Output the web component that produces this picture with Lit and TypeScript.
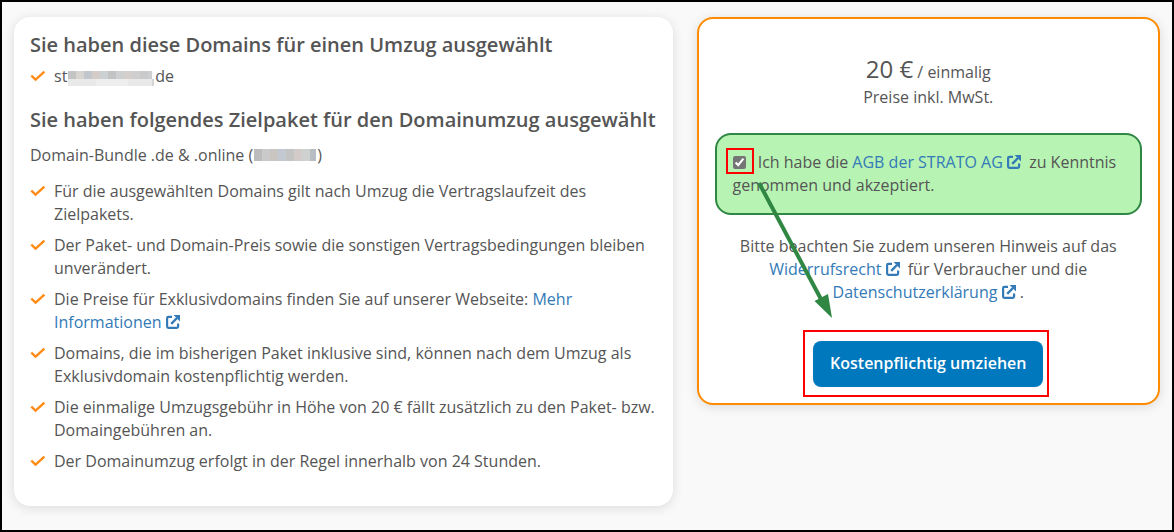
import { LitElement, html, svg, css } from "lit";
import { customElement } from "lit/decorators.js";

const check = html`<svg class="check" viewBox="0 0 16 12" aria-hidden="true">
  <path d="M1.3 5.6 L5.6 9.7 L14.4 1.6" fill="none" stroke="#ff8a14" stroke-width="2.3" />
</svg>`;

const external = html`<svg class="external" viewBox="0 0 14 14" aria-hidden="true">
  <path d="M6 1.9 H2.4 Q1.1 1.9 1.1 3.2 V11.6 Q1.1 12.9 2.4 12.9 H10.8 Q12.1 12.9 12.1 11.6 V8.4" fill="none" stroke="currentColor" stroke-width="2.2" />
  <path d="M5.2 8.8 L11 3" fill="none" stroke="currentColor" stroke-width="2.4" />
  <path d="M7.6 0 H14 V6.4 Z" fill="currentColor" />
</svg>`;

const mosaic = (colors: string[], step: number) =>
  colors.map((c, i) => svg`<rect x=${i * step} y="0" width=${step} height="8" fill=${c} />`);

const domainTones = ["#c4c4c4", "#d8d5d1", "#c2c7ce", "#d5ccc8", "#cbd0d3", "#c3c3c4", "#cecfd0", "#d4cecc", "#cfcfd0", "#cacacb", "#cdced0"];
const numberTones = ["#bcbcbd", "#c9cac9", "#c9c6c2", "#c3c9d1", "#c4c4c4", "#d2cbc9", "#cfd1d1", "#b8bdc4"];

@customElement("app-root")
export class AppRoot extends LitElement {
  static styles = css`
    :host {
      display: block;
      font: 16px/23px "Open Sans", sans-serif;
      color: #555;
    }
    * { box-sizing: border-box; }
    .page {
      min-height: 100vh;
      border: 2px solid #000;
      background: #f9f9f9;
      padding: 15px 12px 24px;
      display: grid;
      grid-template-columns: repeat(12, minmax(0, 1fr));
      column-gap: 24px;
      align-items: start;
    }
    .card {
      background: #fff;
      border-radius: 16px;
      box-shadow: 0 2px 12px rgba(0, 0, 0, 0.12);
    }
    .details { grid-column: span 7; padding: 16px 16px 33px; }
    .order {
      grid-column: span 5;
      position: relative;
      border: 2px solid #ff8c00;
      padding: 36px 16px 16px;
      text-align: center;
    }
    h2 { margin: 0; font-size: 20px; line-height: 24px; font-weight: 600; }
    p { margin: 0; }
    .list { list-style: none; margin: 0; padding: 0; display: grid; gap: 8px; }
    .domains { margin: 8px 0 20px; }
    .package { margin: 12px 0 13px; }
    .item { display: grid; grid-template-columns: 16px minmax(0, 1fr); column-gap: 8px; }
    .check { width: 16px; height: 12px; margin-top: 5px; }
    a { color: #337ab7; text-decoration: none; }
    .external { width: 14px; height: 14px; vertical-align: -1px; }
    .wide { margin-right: 4px; }
    .mask { display: inline-block; }
    .mask-domain { width: 86px; height: 15px; margin: 0 1px; vertical-align: -4px; }
    .mask-number { width: 62px; height: 12px; margin: 0 1px; vertical-align: 0; }
    .price { line-height: 28px; }
    .amount { font-size: 24px; }
    .terms {
      display: block;
      margin: 24px 0 20px;
      padding: 16px;
      border: 2px solid #2f8743;
      border-radius: 16px;
      background: #b7f3b3;
      text-align: left;
    }
    .target { position: relative; display: inline-block; }
    .target::after {
      content: "";
      position: absolute;
      inset: -8px -8px -5px -7px;
      border: 2px solid #f00;
      pointer-events: none;
    }
    .tick { margin-right: 8px; width: 13px; height: 13px; line-height: 0; vertical-align: -1px; }
    .box { display: block; margin: 0; width: 13px; height: 13px; accent-color: #757575; }
    .submit { margin-top: 37px; }
    .submit::after { inset: -11px -6px -10px -10px; }
    .button {
      display: block;
      border: 0;
      border-radius: 8px;
      padding: 11px 17px 12px;
      background: #0078be;
      color: #fff;
      font: inherit;
      font-weight: 600;
      cursor: pointer;
    }
    .arrow {
      position: absolute;
      left: 56px;
      top: 162px;
      width: 80px;
      height: 140px;
      pointer-events: none;
    }
  `;

  private item(content: unknown) {
    return html`<li class="item">${check}<span>${content}</span></li>`;
  }

  private maskedDomain() {
    return html`st<svg class="mask mask-domain" viewBox="0 0 86 15" aria-hidden="true">
      ${mosaic(domainTones, 8)}
      <rect y="8" width="86" height="7" fill="#e9e9ea" />
      <rect x="28" y="8" width="32" height="7" fill="#eeeeef" />
      <rect x="84" y="0" width="2" height="8" fill="#fff" />
      <rect x="84" y="8" width="2" height="7" fill="#d4d4d6" />
    </svg>de`;
  }

  render() {
    return html`
      <main class="page">
        <section class="card details">
          <h2>Sie haben diese Domains für einen Umzug ausgewählt</h2>
          <ul class="list domains">
            ${this.item(this.maskedDomain())}
          </ul>
          <h2>Sie haben folgendes Zielpaket für den Domainumzug ausgewählt</h2>
          <p class="package">Domain-Bundle .de &amp; .online (<svg class="mask mask-number" viewBox="0 0 62 8" preserveAspectRatio="none" aria-hidden="true">${mosaic(numberTones, 8)}</svg>)</p>
          <ul class="list">
            ${this.item("Für die ausgewählten Domains gilt nach Umzug die Vertragslaufzeit des Zielpakets.")}
            ${this.item("Der Paket- und Domain-Preis sowie die sonstigen Vertragsbedingungen bleiben unverändert.")}
            ${this.item(html`Die Preise für Exklusivdomains finden Sie auf unserer Webseite: <a href="#">Mehr Informationen ${external}</a>`)}
            ${this.item("Domains, die im bisherigen Paket inklusive sind, können nach dem Umzug als Exklusivdomain kostenpflichtig werden.")}
            ${this.item("Die einmalige Umzugsgebühr in Höhe von 20 € fällt zusätzlich zu den Paket- bzw. Domaingebühren an.")}
            ${this.item("Der Domainumzug erfolgt in der Regel innerhalb von 24 Stunden.")}
          </ul>
        </section>

        <section class="card order">
          <p class="price"><span class="amount">20 €</span> / einmalig</p>
          <p>Preise inkl. MwSt.</p>
          <label class="terms" for="accept"><span class="target tick"><input class="box" id="accept" type="checkbox" checked /></span> Ich habe die <a href="#">AGB der STRATO AG ${external}</a><span class="wide"></span> zu Kenntnis genommen und akzeptiert.</label>
          <p>Bitte beachten Sie zudem unseren Hinweis auf das <a href="#">Widerrufsrecht ${external}</a><span class="wide"></span> für Verbraucher und die <a href="#">Datenschutzerklärung ${external}</a> .</p>
          <div class="target submit"><button class="button" type="button">Kostenpflichtig umziehen</button></div>
          <svg class="arrow" viewBox="0 0 80 140" aria-hidden="true">
            <path d="M4 2 L67 120" stroke="#2f8743" stroke-width="4" />
            <path d="M59.5 120 L73 113 L77 137 Z" fill="#2f8743" />
          </svg>
        </section>
      </main>
    `;
  }
}
